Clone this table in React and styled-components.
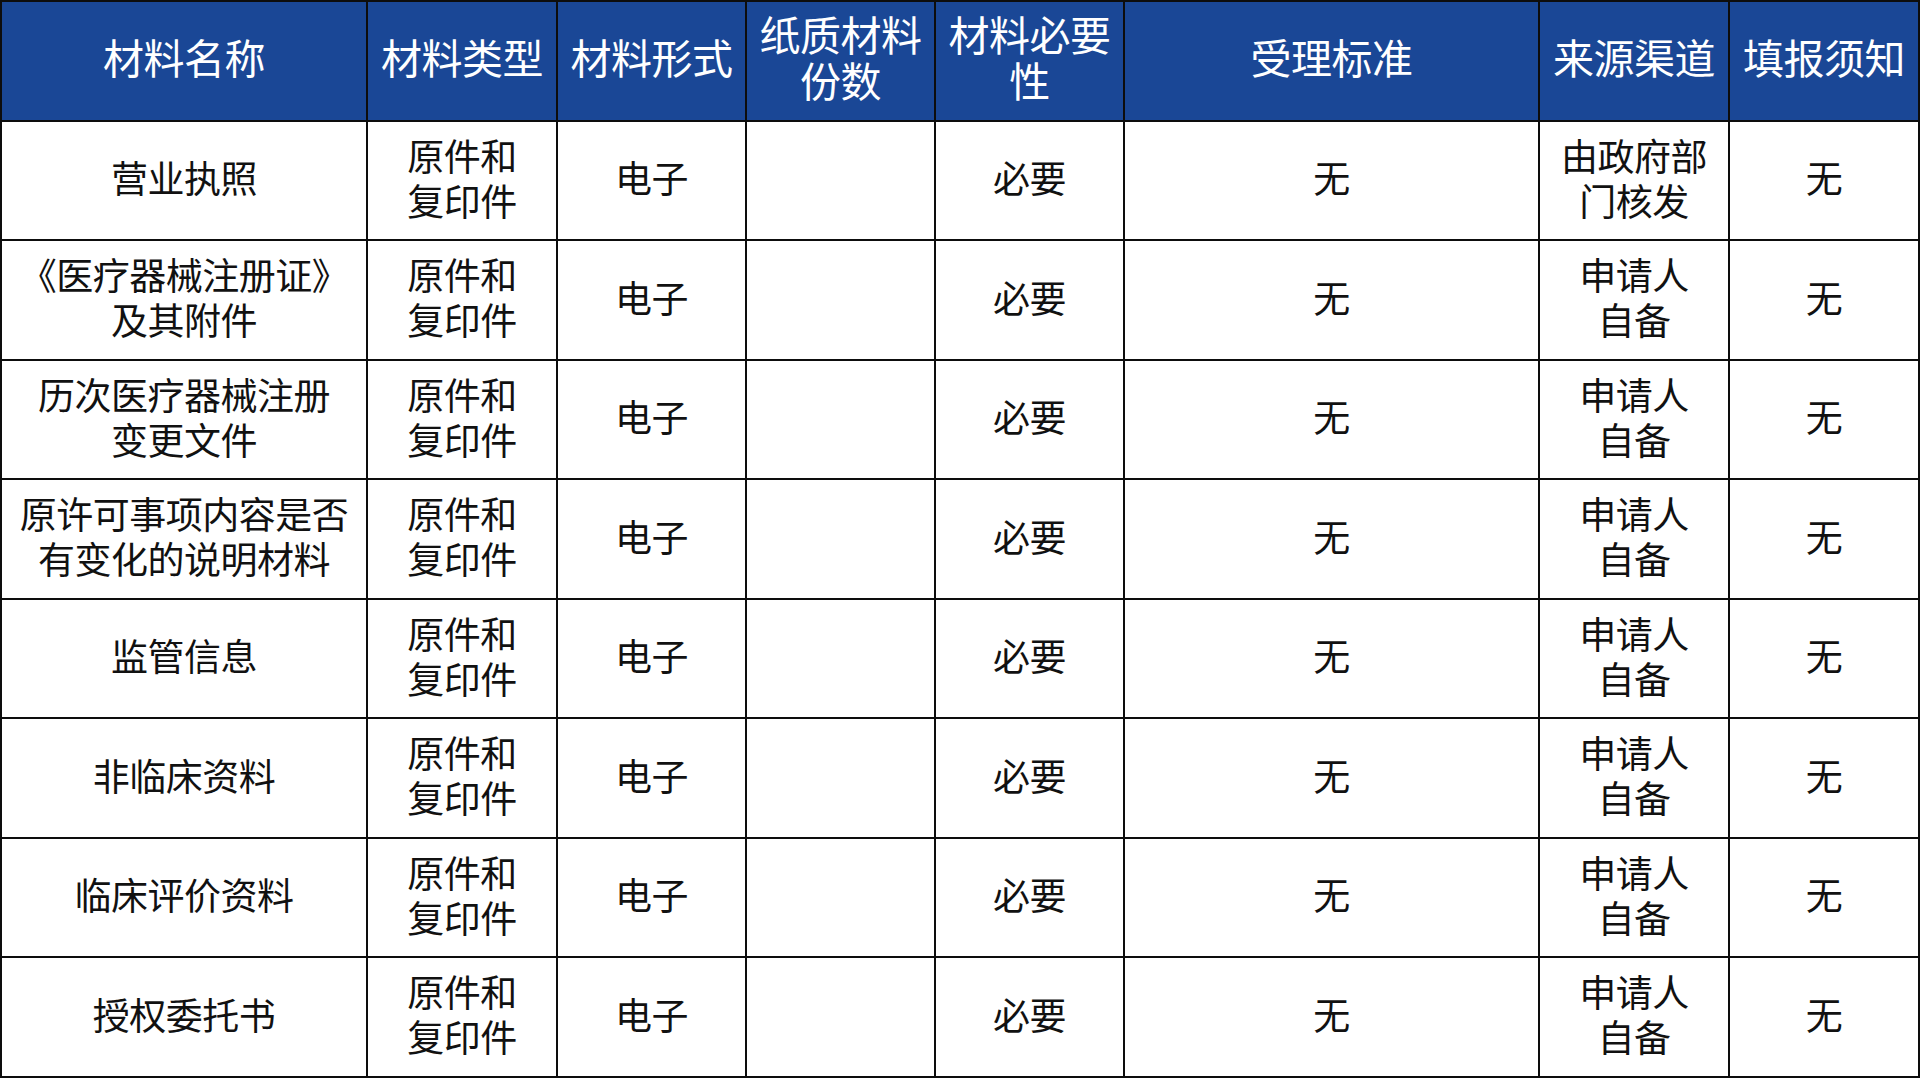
import styled, { createGlobalStyle } from "styled-components";

const GlobalStyle = createGlobalStyle`
  html, body {
    margin: 0;
    padding: 0;
    background: #ffffff;
  }
  body {
    font-family: "Noto Sans CJK SC", "Noto Sans", sans-serif;
  }
`;

const columns = [
  { title: ["材料名称"], width: 366 },
  { title: ["材料类型"], width: 190 },
  { title: ["材料形式"], width: 189 },
  { title: ["纸质材料", "份数"], width: 189 },
  { title: ["材料必要", "性"], width: 189 },
  { title: ["受理标准"], width: 415 },
  { title: ["来源渠道"], width: 190 },
  { title: ["填报须知"], width: 190 },
];

const applicant = ["申请人", "自备"];

const rows = [
  { name: ["营业执照"], source: ["由政府部", "门核发"] },
  { name: ["《医疗器械注册证》", "及其附件"], source: applicant },
  { name: ["历次医疗器械注册", "变更文件"], source: applicant },
  { name: ["原许可事项内容是否", "有变化的说明材料"], source: applicant },
  { name: ["监管信息"], source: applicant },
  { name: ["非临床资料"], source: applicant },
  { name: ["临床评价资料"], source: applicant },
  { name: ["授权委托书"], source: applicant },
];

// each cell's text is given line by line, as in the source sheet
const Lines = ({ lines }) =>
  lines.map((line, i) => <Line key={i}>{line}</Line>);

export default function App() {
  return (
    <>
      <GlobalStyle />
      <Table>
        <colgroup>
          {columns.map((col, i) => (
            <col key={i} style={{ width: col.width }} />
          ))}
        </colgroup>
        <thead>
          <Row>
            {columns.map((col, i) => (
              <HeadCell key={i}>
                <Lines lines={col.title} />
              </HeadCell>
            ))}
          </Row>
        </thead>
        <tbody>
          {rows.map((row, i) => (
            <Row key={i}>
              <Cell>
                <Lines lines={row.name} />
              </Cell>
              <Cell>
                <Lines lines={["原件和", "复印件"]} />
              </Cell>
              <Cell>电子</Cell>
              <Cell />
              <Cell>必要</Cell>
              <Cell>无</Cell>
              <Cell>
                <Lines lines={row.source} />
              </Cell>
              <Cell>无</Cell>
            </Row>
          ))}
        </tbody>
      </Table>
    </>
  );
}

const Table = styled.table`
  width: 1919px;
  table-layout: fixed;
  border-collapse: collapse;
`;

const Row = styled.tr`
  height: 119.5px;
`;

const Line = styled.div`
  white-space: nowrap;
`;

const HeadCell = styled.th`
  background: #1a4796;
  color: #ffffff;
  font-weight: 400;
  font-size: 41px;
  line-height: 46px;
  letter-spacing: -0.5px;
  text-align: center;
  vertical-align: middle;
  padding: 0 0 10px;
  border: 2px solid #0d0d0d;
`;

const Cell = styled.td`
  color: #111111;
  font-size: 37px;
  line-height: 45px;
  letter-spacing: -0.5px;
  text-align: center;
  vertical-align: middle;
  padding: 0 0 5px;
  border: 2px solid #0d0d0d;
`;
